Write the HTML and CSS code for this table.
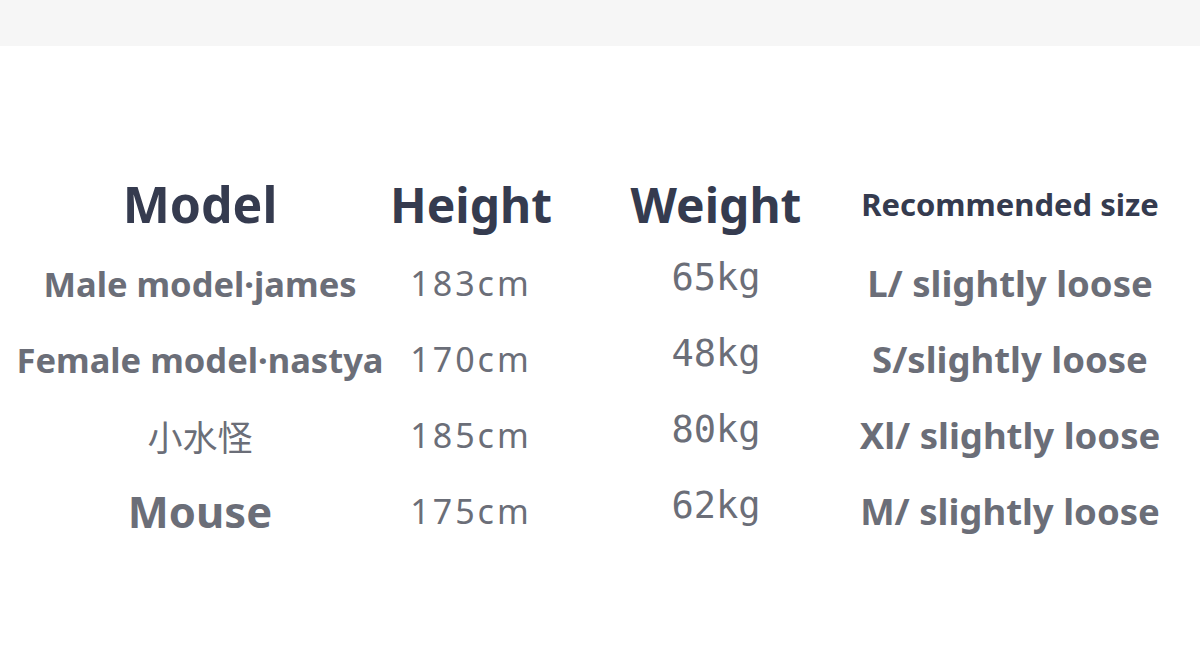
FILE: index.html
```html
<!DOCTYPE html>
<html lang="en">
<head>
<meta charset="utf-8">
<title>Size chart</title>
<link rel="stylesheet" href="styles.css">
</head>
<body>
<div class="topbar"></div>
<main class="sheet">
  <div class="chart">
    <div class="cell head c1">Model</div>
    <div class="cell head c2">Height</div>
    <div class="cell head c3">Weight</div>
    <div class="cell head c4 small">Recommended size</div>

    <div class="cell name">Male model·james</div>
    <div class="cell height">183cm</div>
    <div class="cell weight">65kg</div>
    <div class="cell size">L/ slightly loose</div>

    <div class="cell name">Female model·nastya</div>
    <div class="cell height">170cm</div>
    <div class="cell weight">48kg</div>
    <div class="cell size">S/slightly loose</div>

    <div class="cell name cjk">小水怪</div>
    <div class="cell height">185cm</div>
    <div class="cell weight">80kg</div>
    <div class="cell size">Xl/ slightly loose</div>

    <div class="cell name big">Mouse</div>
    <div class="cell height">175cm</div>
    <div class="cell weight">62kg</div>
    <div class="cell size">M/ slightly loose</div>
  </div>
</main>
</body>
</html>
```
FILE: styles.css
```css
* { box-sizing: border-box; }
html, body { margin: 0; padding: 0; background: #ffffff; }
body {
  width: 1200px;
  height: 652px;
  overflow: hidden;
  font-family: "Noto Sans", "Noto Sans CJK SC", sans-serif;
}
.topbar {
  height: 46px;
  background: #f6f6f6;
}
.sheet {
  padding-top: 117px;
}
.chart {
  display: grid;
  grid-template-columns: 400px 142px 348px 240px;
  grid-template-rows: 82px repeat(4, 76px);
}
.cell {
  display: flex;
  justify-content: center;
  align-items: center;
  white-space: nowrap;
  color: #6b6e78;
}
.head {
  color: #353b4f;
  font-weight: 700;
  font-size: 48px;
}
.head.c1 {
  font-size: 50px;
}
.head.small {
  font-size: 31px;
}
.name {
  font-weight: 700;
  font-size: 34.5px;
}
.name.big {
  font-size: 43.5px;
}
.name.cjk {
  font-weight: 400;
  font-family: "Noto Sans CJK SC", sans-serif;
  font-size: 35px;
}
.height {
  font-size: 34px;
  letter-spacing: 3px;
}
.weight {
  font-family: "DejaVu Sans Mono", monospace;
  font-size: 37px;
  padding-bottom: 12px;
}
.size {
  font-weight: 700;
  font-size: 36.5px;
}
```
